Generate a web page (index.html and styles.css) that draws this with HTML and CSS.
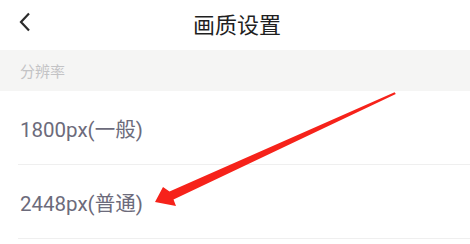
FILE: index.html
```html
<!DOCTYPE html>
<html lang="zh">
<head>
    <meta charset="UTF-8">
    <title>画质设置</title>
    <link rel="stylesheet" href="styles.css">
</head>
<body>
<div class="page">
    <div class="navbar">
        <span class="back">
            <svg width="12" height="20" viewBox="0 0 12 20"><path d="M10 1.5 L2 10 L10 18.5" fill="none" stroke="#2b2b2b" stroke-width="2.2"/></svg>
        </span>
        <h1>画质设置</h1>
    </div>
    <div class="section-title">分辨率</div>
    <ul class="options">
        <li>1800px(一般)</li>
        <li>2448px(普通)</li>
    </ul>
    <svg class="arrow" width="470" height="244" viewBox="0 0 470 244">
        <polygon points="155,202 163,187 169.5,191.5 394.6,92.3 395.8,93.9 173.5,199.5 176,206" fill="#f6221a"/>
    </svg>
</div>
</body>
</html>
```

FILE: styles.css
```css
html,body{
    margin:0;
    padding:0;
    background:#fff;
}
.page{
    position:relative;
    width:470px;
    height:244px;
    overflow:hidden;
    font-family:Roboto,"Noto Sans CJK SC",sans-serif;
}
.navbar{
    height:50px;
    display:flex;
    align-items:center;
    justify-content:center;
    position:relative;
}
.back{
    position:absolute;
    left:19px;
    top:12px;
}
h1{
    margin:0;
    font-size:22px;
    font-weight:400;
    color:#1f1f1f;
    padding-bottom:5px;
    padding-left:4px;
}
.section-title{
    height:41px;
    background:#f5f5f4;
    color:#c3c3c5;
    font-size:15px;
    padding-left:20px;
    display:flex;
    align-items:center;
}
.options{
    list-style:none;
    margin:0;
    padding:0 0 0 18px;
}
.options li{
    height:73px;
    border-bottom:1px solid #efefef;
    display:flex;
    align-items:center;
    padding-left:2px;
    font-size:20.5px;
    color:#6c6b7b;
}
.arrow{
    position:absolute;
    left:0;
    top:0;
}
```
